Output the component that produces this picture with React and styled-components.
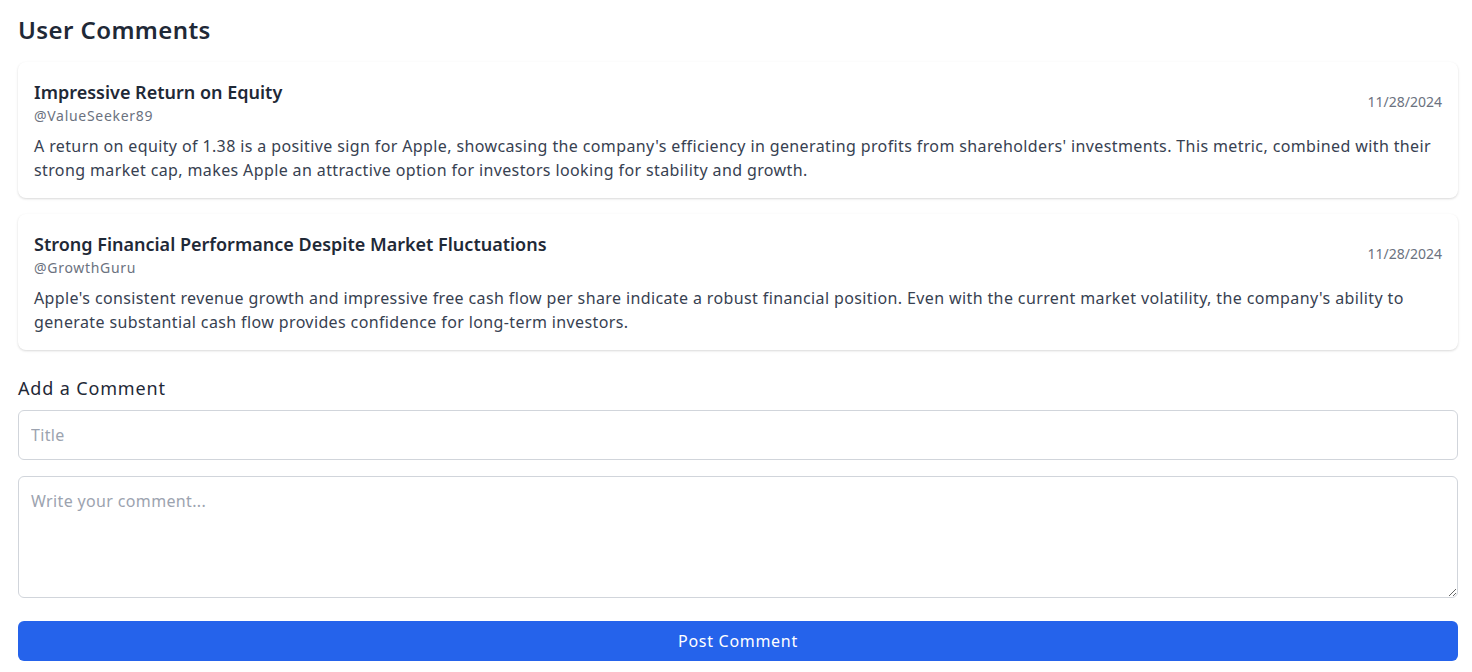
import React, { useState } from "react";
import styled, { createGlobalStyle } from "styled-components";

const GlobalStyle = createGlobalStyle`
  body {
    margin: 0;
    background: #ffffff;
    font-family: "Noto Sans", "Open Sans", sans-serif;
    color: #1f2937;
  }
`;

const comments = [
  {
    id: 1,
    title: "Impressive Return on Equity",
    user: "@ValueSeeker89",
    date: "11/28/2024",
    body: "A return on equity of 1.38 is a positive sign for Apple, showcasing the company's efficiency in generating profits from shareholders' investments. This metric, combined with their strong market cap, makes Apple an attractive option for investors looking for stability and growth.",
  },
  {
    id: 2,
    title: "Strong Financial Performance Despite Market Fluctuations",
    user: "@GrowthGuru",
    date: "11/28/2024",
    body: "Apple's consistent revenue growth and impressive free cash flow per share indicate a robust financial position. Even with the current market volatility, the company's ability to generate substantial cash flow provides confidence for long-term investors.",
  },
];

const App = () => {
  const [title, setTitle] = useState("");
  const [text, setText] = useState("");
  return (
    <Page>
      <GlobalStyle />
      <Heading>User Comments</Heading>
      <List>
        {comments.map((c) => (
          <Card key={c.id}>
            <CardHeader>
              <div>
                <CardTitle>{c.title}</CardTitle>
                <User>{c.user}</User>
              </div>
              <DateText>{c.date}</DateText>
            </CardHeader>
            <Body>{c.body}</Body>
          </Card>
        ))}
      </List>
      <SubHeading>Add a Comment</SubHeading>
      <Input
        placeholder="Title"
        value={title}
        onChange={(e) => setTitle(e.target.value)}
      />
      <TextArea
        rows={4}
        placeholder="Write your comment..."
        value={text}
        onChange={(e) => setText(e.target.value)}
      />
      <Button>Post Comment</Button>
    </Page>
  );
};

export default App;

const Page = styled.div`
  padding: 14px 14px 10px 18px;
`;

const Heading = styled.h2`
  margin: 0 0 16px;
  font-size: 24px;
  line-height: 32px;
  font-weight: 600;
  letter-spacing: 0.4px;
  color: #1f2937;
`;

const List = styled.div`
  display: flex;
  flex-direction: column;
  gap: 16px;
`;

const Card = styled.div`
  background: #fff;
  border-radius: 8px;
  padding: 16px;
  box-shadow: 0 1px 3px rgba(0, 0, 0, 0.1), 0 1px 2px rgba(0, 0, 0, 0.06);
`;

const CardHeader = styled.div`
  display: flex;
  justify-content: space-between;
  align-items: center;
`;

const CardTitle = styled.h3`
  margin: 0;
  font-size: 18px;
  line-height: 28px;
  font-weight: 600;
  color: #1f2937;
`;

const User = styled.div`
  font-size: 14px;
  line-height: 20px;
  letter-spacing: 0.7px;
  color: #6b7280;
`;

const DateText = styled.span`
  font-size: 14px;
  line-height: 20px;
  color: #6b7280;
`;

const Body = styled.p`
  margin: 8px 0 0;
  font-size: 16px;
  line-height: 24px;
  letter-spacing: 0.38px;
  color: #374151;
`;

const SubHeading = styled.h4`
  margin: 24px 0 8px;
  font-size: 18px;
  line-height: 28px;
  font-weight: 400;
  letter-spacing: 0.85px;
  color: #1f2937;
`;

const fieldStyles = `
  display: block;
  box-sizing: border-box;
  width: 100%;
  padding: 12px;
  border: 1px solid #d1d5db;
  border-radius: 6px;
  font-family: "Noto Sans", "Open Sans", sans-serif;
  font-size: 16px;
  line-height: 24px;
  letter-spacing: 0.35px;
  color: #1f2937;
  background: #fff;
  outline: none;
  &::placeholder {
    color: #9ca3af;
  }
`;

const Input = styled.input`
  ${fieldStyles}
  height: 50px;
  margin-bottom: 16px;
`;

const TextArea = styled.textarea`
  ${fieldStyles}
  height: 122px;
  margin-bottom: 23px;
  resize: vertical;
`;

const Button = styled.button`
  display: block;
  width: 100%;
  height: 40px;
  border: none;
  border-radius: 6px;
  background: #2563eb;
  color: #fff;
  font-family: "Noto Sans", "Open Sans", sans-serif;
  font-size: 16px;
  letter-spacing: 0.7px;
  cursor: pointer;
`;
